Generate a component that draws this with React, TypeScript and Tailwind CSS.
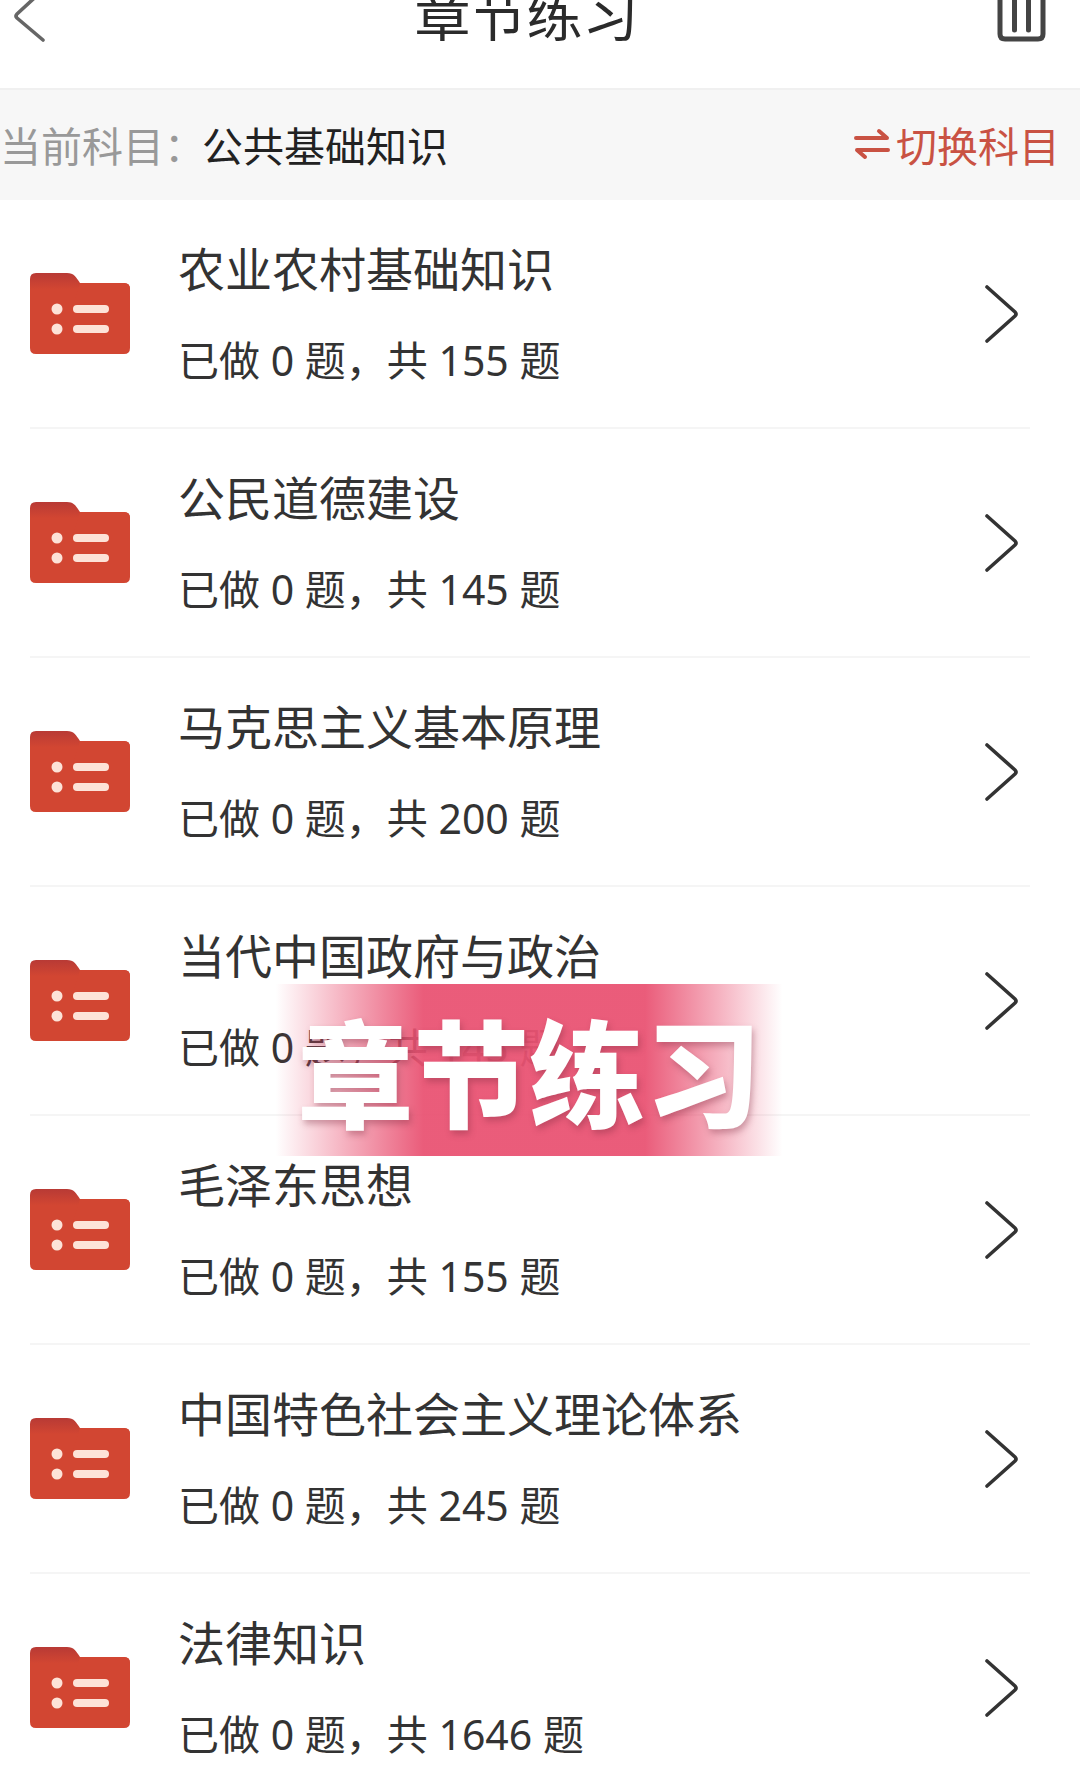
import { useState } from "react";

const chapters = [
  { title: "农业农村基础知识", done: 0, total: 155 },
  { title: "公民道德建设", done: 0, total: 145 },
  { title: "马克思主义基本原理", done: 0, total: 200 },
  { title: "当代中国政府与政治", done: 0, total: 145 },
  { title: "毛泽东思想", done: 0, total: 155 },
  { title: "中国特色社会主义理论体系", done: 0, total: 245 },
  { title: "法律知识", done: 0, total: 1646 },
];

function FolderIcon() {
  return (
    <svg width="100" height="82" viewBox="0 0 100 82" className="shrink-0" aria-hidden="true">
      <defs>
        <linearGradient id="tab" x1="0" y1="0" x2="0" y2="1">
          <stop offset="0" stopColor="#b83a35" />
          <stop offset="0.2" stopColor="#d24632" />
          <stop offset="1" stopColor="#d24632" />
        </linearGradient>
      </defs>
      <path
        d="M6 0H37C44 0 46 4 50 10H94Q100 10 100 16V75Q100 81 94 81H6Q0 81 0 75V6Q0 0 6 0Z"
        fill="url(#tab)"
      />
      <path d="M50 10H94Q100 10 100 16V40H40Z" fill="#d24632" />
      <circle cx="27" cy="36" r="5.5" fill="#fde3d8" />
      <circle cx="27" cy="56" r="5.5" fill="#fde3d8" />
      <rect x="43" y="32" width="36" height="8" rx="4" fill="#fde3d8" />
      <rect x="43" y="52" width="36" height="8" rx="4" fill="#fde3d8" />
    </svg>
  );
}

function RightIcon() {
  return (
    <svg width="34" height="60" viewBox="0 0 34 60" className="shrink-0" fill="none" aria-hidden="true">
      <path d="M3 3L31 28Q33 30 31 32L3 57" stroke="#333" strokeWidth="3.6" strokeLinecap="round" />
    </svg>
  );
}

function Header() {
  return (
    <header className="flex h-[90px] items-center justify-between overflow-hidden border-b-2 border-[#f0f0f0] pr-[34px] pb-14 pl-[13px]">
      <button type="button" aria-label="返回">
        <svg width="44" height="56" viewBox="0 0 44 56" fill="none">
          <path d="M30 2L4 26Q2 28 4 30L30 52" stroke="#666" strokeWidth="3.6" strokeLinecap="round" />
        </svg>
      </button>
      <h1 className="pb-2 text-[56px] leading-[64px] text-[#2b2b2b]">章节练习</h1>
      <button type="button" aria-label="清空">
        <svg width="50" height="54" viewBox="0 0 50 54" fill="none" stroke="#444" strokeWidth="5">
          <path d="M4 0V45Q4 50 9 50H42Q47 50 47 45V0" />
          <path d="M18.500 0V41M32.500 0V41" strokeLinecap="round" />
        </svg>
      </button>
    </header>
  );
}

function App() {
  const [active, setActive] = useState(-1);

  return (
    <div className="relative h-screen overflow-hidden bg-white font-['Noto_Sans_CJK_SC','Noto_Sans',sans-serif]">
      <Header />

      <div className="flex h-[110px] items-center justify-between bg-[#f7f7f7] pr-5 pb-0.5 text-[41px] leading-[60px] whitespace-nowrap">
        <p className="flex gap-6 text-[#222]">
          <span className="w-[178px] shrink-0 text-[#999]">当前科目：</span>
          <span>公共基础知识</span>
        </p>
        <button type="button" className="flex items-center gap-1.5 text-[#c95243]">
          <svg width="36" height="32" viewBox="0 0 36 32" fill="none" stroke="currentColor" strokeWidth="4" strokeLinecap="round" strokeLinejoin="round">
            <path d="M2 10H33L25 3" />
            <path d="M34 22H3L11 29" />
          </svg>
          切换科目
        </button>
      </div>

      <ul className="pr-[50px] pl-[30px]">
        {chapters.map((item, index) => (
          <li key={item.title} className="border-b-2 border-[#f5f5f5]">
            <button
              type="button"
              onClick={() => setActive(index)}
              aria-current={active === index}
              className="flex h-[227px] w-full items-center pr-3 text-left text-[#333]"
            >
              <FolderIcon />
              <span className="flex grow flex-col pb-0.5 pl-12">
                <span className="text-[47px] leading-[92px]">{item.title}</span>
                <span className="pt-0.5 font-['Noto_Sans','Noto_Sans_CJK_SC',sans-serif] text-[41px] leading-[90px]">
                  已做 {item.done} 题，共 {item.total} 题
                </span>
              </span>
              <RightIcon />
            </button>
          </li>
        ))}
      </ul>

      <div className="absolute top-[984px] left-[49%] flex h-[172px] w-[528px] -translate-x-1/2 items-center justify-center bg-[linear-gradient(to_right,rgb(234_84_116/0)_2%,rgb(234_84_116/0.45)_15%,rgb(233_82_114/0.94)_30%,rgb(233_82_114/0.94)_72%,rgb(234_84_116/0.45)_86%,rgb(234_84_116/0)_98%)] pb-1">
        <strong className="text-[116px] leading-none font-black whitespace-nowrap text-white [text-shadow:2px_4px_6px_rgb(120_40_60/0.35)]">
          章节练习
        </strong>
      </div>
    </div>
  );
}

export default App;
